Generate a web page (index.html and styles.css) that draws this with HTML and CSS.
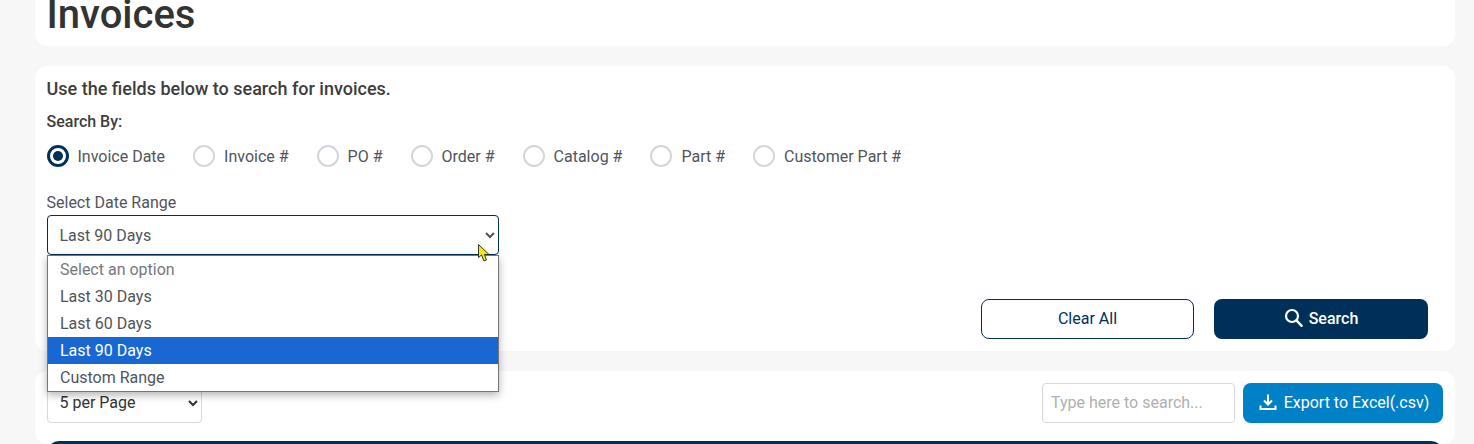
FILE: index.html
```html
<!DOCTYPE html>
<html lang="en">
<head>
<meta charset="utf-8">
<title>Invoices</title>
<link rel="stylesheet" href="styles.css">
</head>
<body>
<main class="page">
  <section class="card title-card">
    <h1 class="title">Invoices</h1>
  </section>

  <section class="card search-card">
    <p class="intro">Use the fields below to search for invoices.</p>
    <p class="search-by">Search By:</p>
    <div class="radios">
      <label class="radio-item"><span class="radio radio-on"></span>Invoice Date</label>
      <label class="radio-item"><span class="radio"></span>Invoice #</label>
      <label class="radio-item"><span class="radio"></span>PO #</label>
      <label class="radio-item"><span class="radio"></span>Order #</label>
      <label class="radio-item"><span class="radio"></span>Catalog #</label>
      <label class="radio-item"><span class="radio"></span>Part #</label>
      <label class="radio-item"><span class="radio"></span>Customer Part #</label>
    </div>
    <div class="range-field">
      <div class="range-label">Select Date Range</div>
      <select class="range-select">
        <option>Last 90 Days</option>
      </select>
      <ul class="dropdown">
        <li class="opt opt-muted">Select an option</li>
        <li class="opt">Last 30 Days</li>
        <li class="opt">Last 60 Days</li>
        <li class="opt opt-active">Last 90 Days</li>
        <li class="opt">Custom Range</li>
      </ul>
      <svg class="cursor" width="12" height="18" viewBox="0 0 12 18" aria-hidden="true">
        <path d="M.5 .5 V13.5 L3.5 11 L6 17 L8.5 16 L6.5 10.5 L11 10.5 Z" fill="#f5ea00" stroke="#333" stroke-width="1"/>
      </svg>
    </div>
    <div class="actions">
      <button class="btn btn-outline">Clear All</button>
      <button class="btn btn-primary">
        <svg width="19" height="20" viewBox="0 0 19 20" aria-hidden="true">
          <circle cx="8" cy="8" r="6" fill="none" stroke="#fff" stroke-width="2.2"/>
          <path d="M12.4 12.4 L17.6 17.8" stroke="#fff" stroke-width="2.4" stroke-linecap="round"/>
        </svg>
        Search
      </button>
    </div>
  </section>

  <section class="card results-card">
    <div class="toolbar">
      <select class="per-page">
        <option>5 per Page</option>
      </select>
      <div class="tools">
        <input class="quick-search" type="text" placeholder="Type here to search...">
        <button class="btn-export">
          <svg width="18" height="18" viewBox="0 0 18 18" aria-hidden="true">
            <path d="M9 1.5 V11 M5 7.5 L9 11.5 L13 7.5" fill="none" stroke="#fff" stroke-width="2"/>
            <path d="M1.5 12.5 V16 H16.5 V12.5" fill="none" stroke="#fff" stroke-width="2"/>
          </svg>
          Export to Excel(.csv)
        </button>
      </div>
    </div>
    <div class="table-head"></div>
  </section>
</main>
</body>
</html>
```
FILE: styles.css
```css
* { box-sizing: border-box; }
html, body { margin: 0; height: 444px; overflow: hidden; }
body {
  background: #f7f7f7;
  font-family: Roboto, "Liberation Sans", sans-serif;
  color: #333;
}
.page {
  display: flex;
  flex-direction: column;
  gap: 20px;
  margin: 0 19px 0 35px;
}
.card { background: #fff; border-radius: 12px; }

.title-card { height: 46px; padding: 0 11.5px; overflow: hidden; border-radius: 0 0 12px 12px; }
.title { margin: -9px 0 0; font-size: 40px; line-height: 47px; font-weight: 500; color: #333; }

.search-card { height: 285px; padding: 12px 27px 0 11.5px; display: flex; flex-direction: column; }
.intro { margin: 0; font-size: 18px; line-height: 21px; font-weight: 500; color: #3d3d3d; }
.search-by { margin: 14px 0 0; font-size: 16px; line-height: 18px; font-weight: 500; color: #3d3d3d; }

.radios { display: flex; gap: 28px; margin-top: 13px; height: 24px; }
.radio-item { display: flex; align-items: center; gap: 9px; font-size: 16px; color: #50555b; }
.radio {
  width: 22px; height: 22px; border-radius: 50%;
  border: 2px solid #d3d6dc; background: #fff; flex: none;
}
.radio-on { border: 3px solid #00305a; position: relative; }
.radio-on::after {
  content: ""; position: absolute; inset: 3px;
  border-radius: 50%; background: #00305a;
}

.range-field { position: relative; width: 452px; margin-top: 25px; }
.range-label { font-size: 16px; line-height: 19px; color: #50555b; }
.range-select {
  display: block; width: 100%; height: 40px; margin-top: 3px;
  padding: 0 8px; background: #fff;
  border: 1px solid #00305a; border-radius: 4px;
  font: 16px Roboto, sans-serif; color: #50555b;
}
.dropdown {
  position: absolute; left: .5px; top: 62px; z-index: 5;
  width: 452px; margin: 0; padding: 0; list-style: none;
  background: #fff; border: 1px solid #767676;
  box-shadow: 0 3px 8px rgba(0, 0, 0, .3);
}
.opt { height: 27px; padding: 0 12px; font-size: 16px; line-height: 27px; color: #50555b; }
.opt-muted { color: #75797e; }
.opt-active { background: #1967d2; color: #fff; }
.cursor { position: absolute; left: 431.5px; top: 51px; z-index: 6; }

.actions { display: flex; justify-content: flex-end; gap: 20px; margin-top: auto; padding-bottom: 12px; }
.btn {
  height: 40px; border-radius: 8px; padding: 0 0 2px;
  font: 16px Roboto, sans-serif; display: flex; align-items: center; justify-content: center; gap: 6px;
}
.btn-outline { width: 213px; background: #fff; border: 1px solid #00305a; color: #00305a; }
.btn-primary { width: 214px; background: #00305a; border: 0; color: #fff; font-weight: 500; }

.results-card { padding: 12px 12px 0; height: 73px; overflow: hidden; }
.toolbar { display: flex; justify-content: space-between; align-items: flex-start; }
.per-page {
  width: 155px; height: 40px; padding: 0 8px 2px 7.5px;
  background: #fff; border: 1px solid #d9d9d9; border-radius: 4px;
  font: 16px Roboto, sans-serif; color: #333;
}
.tools { display: flex; gap: 8px; }
.quick-search {
  width: 193px; height: 40px; padding: 0 8px 2px;
  border: 1px solid #d9d9d9; border-radius: 4px;
  font: 16px Roboto, sans-serif;
}
.quick-search::placeholder { color: #b0b0b0; opacity: 1; }
.btn-export {
  width: 200px; height: 40px; padding: 0 0 2px 2px; border: 0; border-radius: 8px;
  background: #0080c6; color: #fff;
  font: 16px Roboto, sans-serif;
  display: flex; align-items: center; justify-content: center; gap: 7px;
}
.table-head { height: 40px; margin-top: 18px; background: #00305a; border-radius: 12px 12px 0 0; }
```
